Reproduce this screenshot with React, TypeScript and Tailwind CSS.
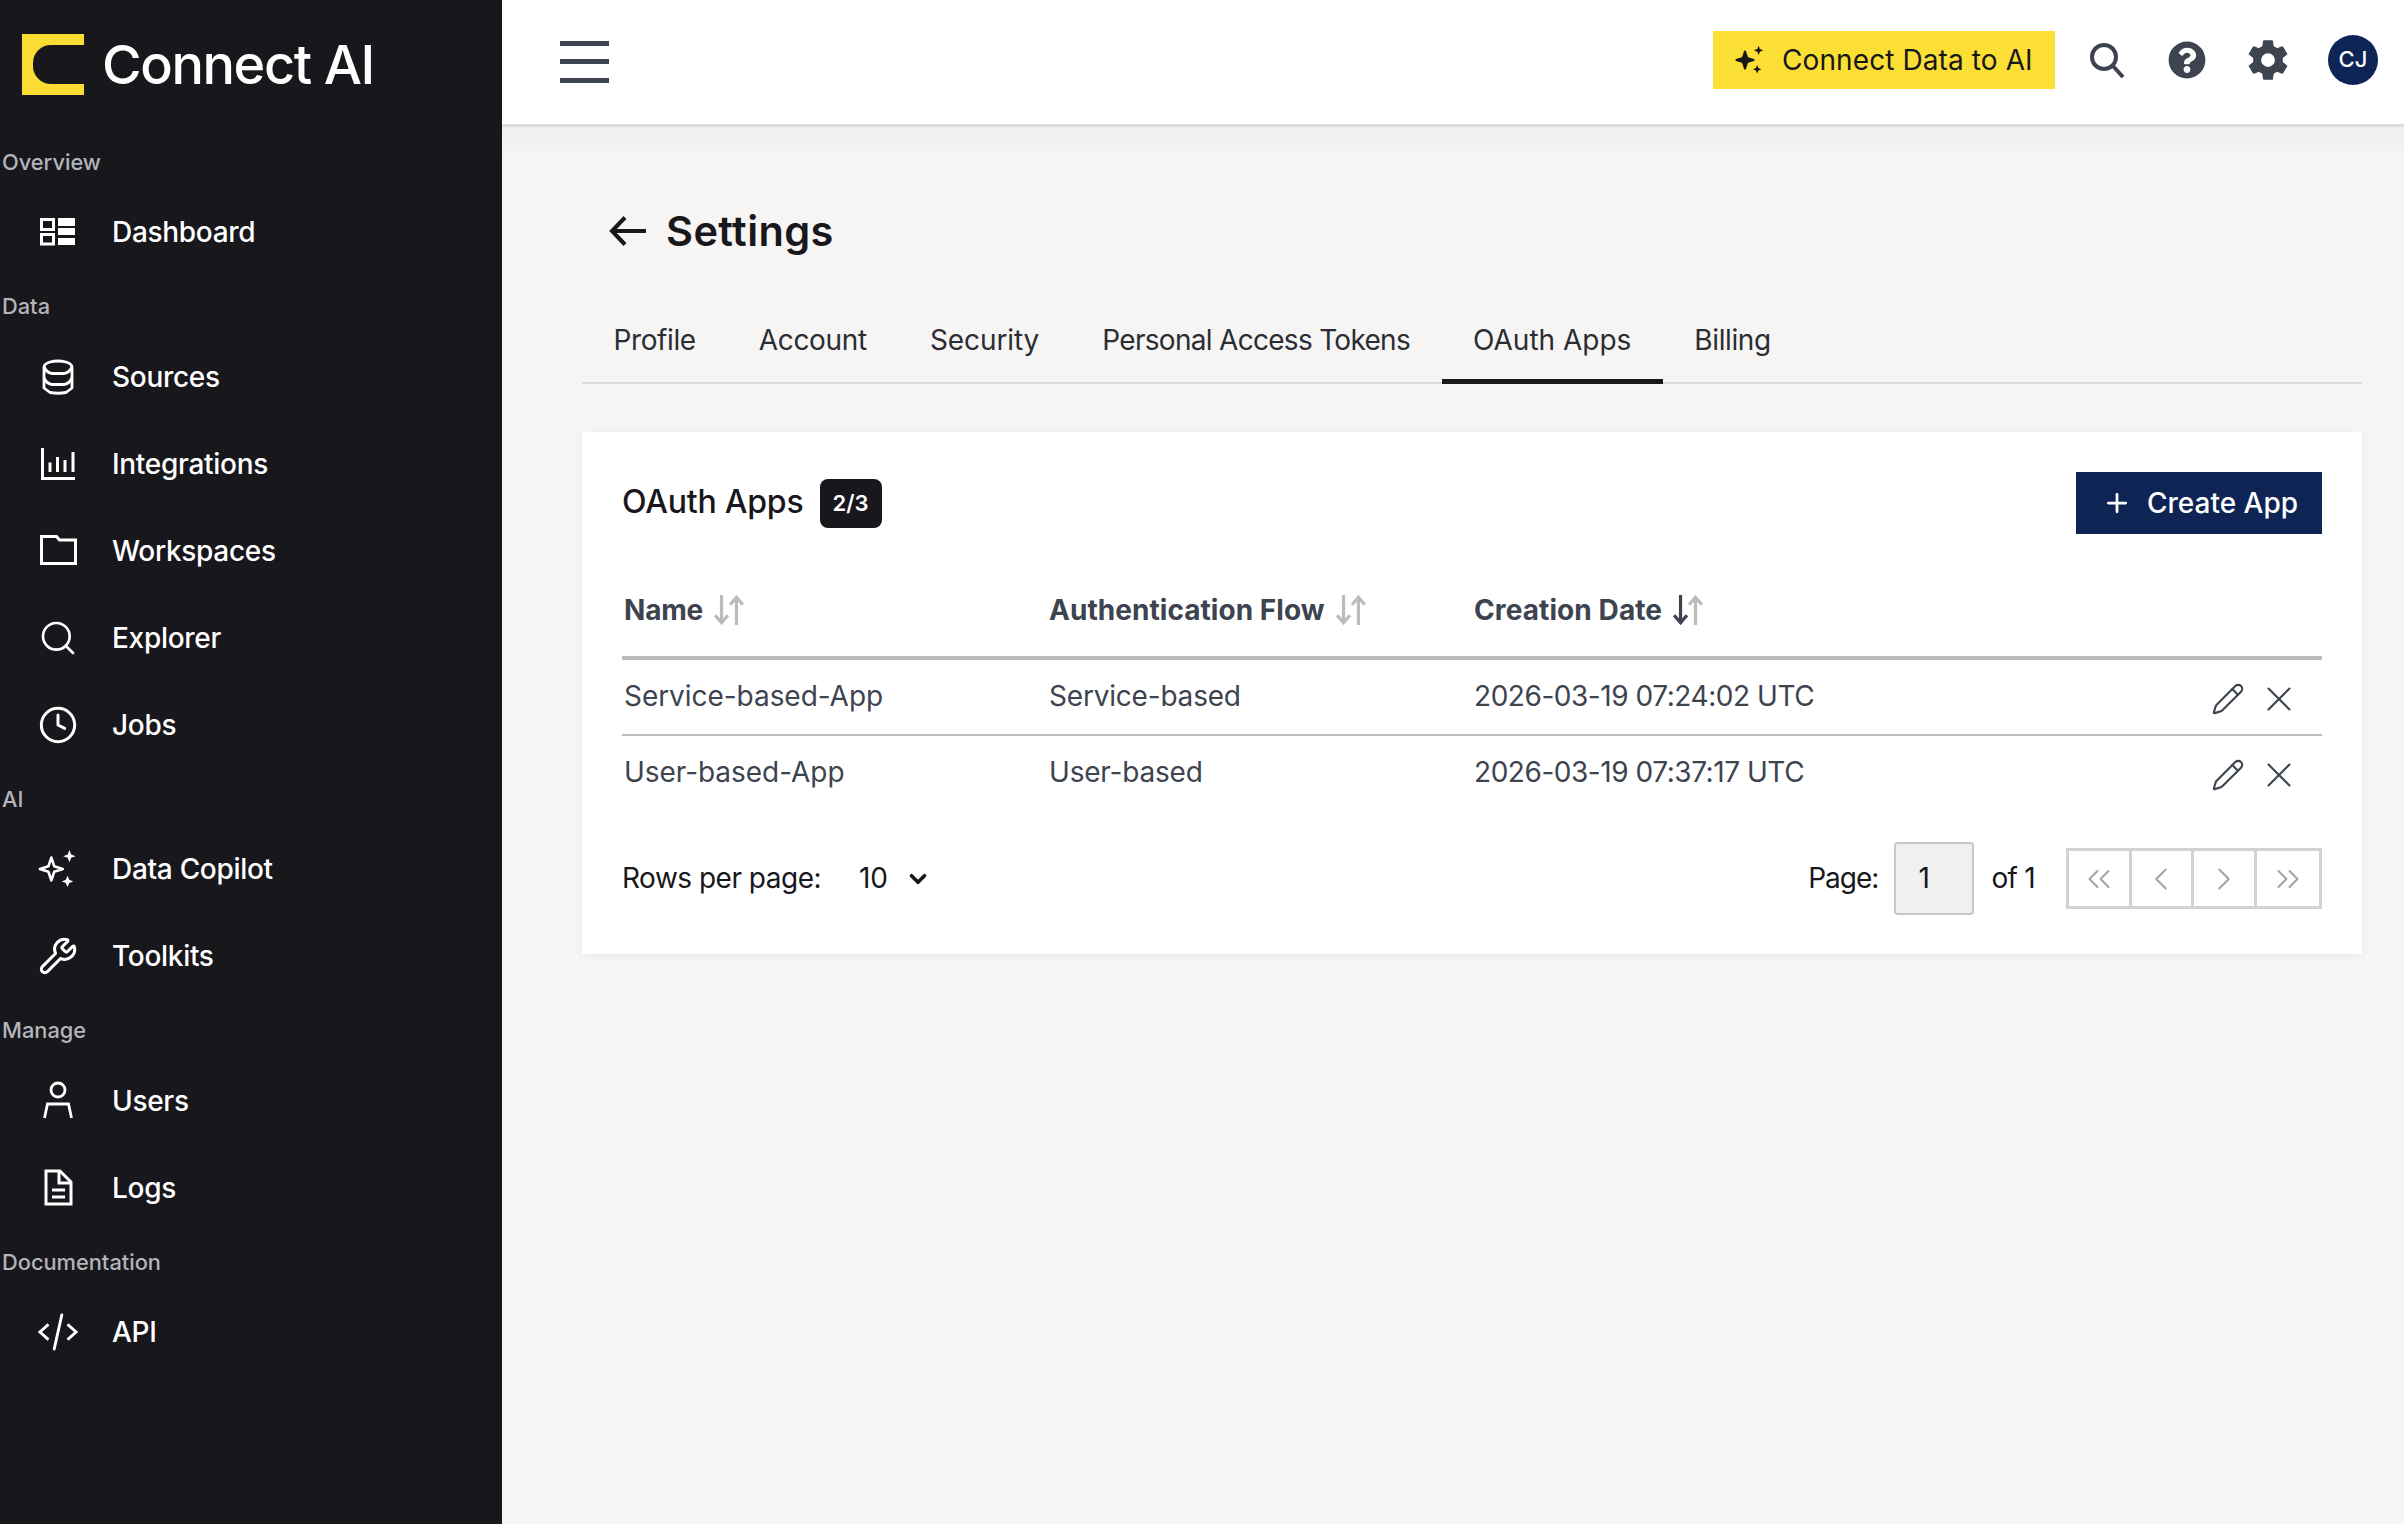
import { ReactNode } from "react"
import { ChevronLeft, ChevronRight, ChevronsLeft, ChevronsRight, ChevronDown, Plus, Search, Clock, Wrench, Pencil, X } from "lucide-react"
import { FaQuestionCircle } from "react-icons/fa"
import { IoSettingsSharp } from "react-icons/io5"

function DashboardIcon() {
  return (
    <svg width="40" height="40" viewBox="0 0 40 40" fill="none" stroke="white" strokeWidth="3">
      <rect x="3.500" y="7.500" width="12" height="10" />
      <rect x="3.500" y="22.500" width="12" height="9.500" />
      <path d="M20 6h17v8H20zM20 16h17v7H20zM20 26h17v7H20z" fill="white" stroke="none" />
    </svg>
  )
}

function DatabaseIcon() {
  return (
    <svg width="40" height="40" viewBox="0 0 40 40" fill="none" stroke="white" strokeWidth="2.800" strokeLinejoin="round">
      <path d="M6 10Q6 7 12 5Q20 3 28 5Q34 7 34 10V31L28 35.500Q20 37 12 35.500L6 31Z" />
      <path d="M6 10Q9 16 14 16.500H26Q31 16 34 10" />
      <path d="M6 21Q9 27 14 27.500H26Q31 27 34 21" />
    </svg>
  )
}

function ChartIcon() {
  return (
    <svg width="40" height="40" viewBox="0 0 40 40" fill="none" stroke="white" strokeWidth="3">
      <path d="M4.500 4v30.500H37" />
      <path d="M12 18.500V28M19.500 13v15M27 16v12M35 8v20" />
    </svg>
  )
}

function FolderIcon() {
  return (
    <svg width="40" height="40" viewBox="0 0 40 40" fill="none" stroke="white" strokeWidth="3">
      <path d="M3.500 5.500h15l3 3.500h16v23.500h-34z" />
    </svg>
  )
}

function SparkleIcon({ color = "white", solid = false, size = 42 }: { color?: string; solid?: boolean; size?: number }) {
  return (
    <svg width={size} height={size} viewBox="0 0 42 42" fill="none">
      <path d="M14 9l3 9 9 3-9 3-3 9-3-9-9-3 9-3z" stroke={color} strokeWidth="2.800" strokeLinejoin="round" fill={solid ? color : "none"} />
      <path d="M33 1l1.800 4.700 4.700 1.800-4.700 1.800L33 14l-1.800-4.700-4.700-1.800 4.700-1.800zM31 28l1.800 4.200 4.200 1.800-4.200 1.800L31 40l-1.800-4.200-4.200-1.800 4.200-1.800z" fill={color} />
    </svg>
  )
}

function UserIcon() {
  return (
    <svg width="40" height="40" viewBox="0 0 40 40" fill="none" stroke="white" strokeWidth="2.800">
      <circle cx="20" cy="9" r="7" />
      <path d="M6.500 37l3-14h21l3 14" />
    </svg>
  )
}

function FileIcon() {
  return (
    <svg width="40" height="40" viewBox="0 0 40 40" fill="none" stroke="white" strokeWidth="3">
      <path d="M8 3h14l11 11v22H8z" />
      <path d="M21 3v12h12" />
      <path d="M14 22h13M14 29h13" />
    </svg>
  )
}

function CodeIcon() {
  return (
    <svg width="42" height="40" viewBox="0 0 42 40" fill="none" stroke="white" strokeWidth="3">
      <path d="M11 12l-9 8 9 8M31 12l9 8-9 8" />
      <path d="M25 2l-8 36" strokeLinecap="round" />
    </svg>
  )
}

function HeaderSearchIcon() {
  return (
    <svg width="36" height="36" viewBox="0 0 36 36" fill="none" stroke="#3d4450" strokeWidth="4">
      <circle cx="15" cy="15" r="12" />
      <path d="M23.500 23.500L34 35" />
    </svg>
  )
}

function NavLabel({ children }: { children: ReactNode }) {
  return <div className="flex h-[57.500px] items-center pl-[2px] text-[21.800px] font-medium text-[#b4b4ba]">{children}</div>
}

function NavItem({ icon, label }: { icon: ReactNode; label: string }) {
  return (
    <div className="flex h-[87px] items-center pb-[5px] pl-[38px]">
      <span className="flex w-[40px] justify-center">{icon}</span>
      <span className="ml-[34px] text-[28px] font-medium tracking-[-0.3px] text-white">{label}</span>
    </div>
  )
}

function SortIcon({ active = false }: { active?: boolean }) {
  return (
    <svg width="32" height="32" viewBox="0 0 30 30" fill="none" strokeWidth="3">
      <path d="M8 1v26M2 20l6 7 6-7" stroke={active ? "#3d4450" : "#bcbcbc"} />
      <path d="M22 29V3M16 10l6-7 6 7" stroke="#bcbcbc" />
    </svg>
  )
}

function AppRow({ name, flow, date, last = false }: { name: string; flow: string; date: string; last?: boolean }) {
  return (
    <div className={`flex items-center pl-[2px] text-[28px] tracking-[-0.05px] text-[#3d4450] ${last ? "h-[74px]" : "h-[76px] border-b-[2px] border-[#bcbcbc]"}`}>
      <div className="w-[425px] pb-[2px]">{name}</div>
      <div className="w-[425px] pb-[2px] tracking-[-0.2px]">{flow}</div>
      <div className="flex-1 pb-[2px] tracking-[-0.45px]">{date}</div>
      <Pencil size={34} strokeWidth={1.500} className="mt-[3px]" />
      <X size={42} strokeWidth={1.200} className="ml-[13px] mr-[22px] mt-[3px]" />
    </div>
  )
}

function PageButton({ children }: { children: ReactNode }) {
  return <div className="flex h-full w-[64px] items-center justify-center border-r-[3px] border-[#d2d2d2] text-[#a4a4a4] last:border-r-0">{children}</div>
}

const tabs = [
  { label: "Profile", cls: "tracking-[-0.4px]" },
  { label: "Account", cls: "tracking-[-0.3px]" },
  { label: "Security", cls: "tracking-[-0.1px]" },
  { label: "Personal Access Tokens", cls: "tracking-[-0.7px]" },
  { label: "OAuth Apps", cls: "tracking-[0px]" },
  { label: "Billing", cls: "tracking-[-0.4px]" },
]

export default function App() {
  return (
    <div className="flex h-[1524px] w-[2404px] overflow-hidden bg-[#f6f5f4] font-['Inter',sans-serif]">
      <aside className="w-[502px] shrink-0 bg-[#17171c]">
        <div className="flex h-[133.500px] items-start pl-[22px] pt-[34px]">
          <div className="relative h-[61px] w-[62px] bg-[#fbdc32]">
            <div className="absolute right-0 top-[11px] h-[39px] w-[51px] rounded-l-[18px] bg-[#17171c]" />
          </div>
          <span className="ml-[18px] text-[54px] font-medium leading-[62px] tracking-[-1.400px] text-white">Connect AI</span>
        </div>
        <NavLabel>Overview</NavLabel>
        <NavItem icon={<DashboardIcon />} label="Dashboard" />
        <NavLabel>Data</NavLabel>
        <NavItem icon={<DatabaseIcon />} label="Sources" />
        <NavItem icon={<ChartIcon />} label="Integrations" />
        <NavItem icon={<FolderIcon />} label="Workspaces" />
        <NavItem icon={<Search size={48} strokeWidth={1.600} color="white" />} label="Explorer" />
        <NavItem icon={<Clock size={42} strokeWidth={1.800} color="white" />} label="Jobs" />
        <NavLabel>AI</NavLabel>
        <NavItem icon={<SparkleIcon />} label="Data Copilot" />
        <NavItem icon={<Wrench size={44} strokeWidth={1.800} color="white" />} label="Toolkits" />
        <NavLabel>Manage</NavLabel>
        <NavItem icon={<UserIcon />} label="Users" />
        <NavItem icon={<FileIcon />} label="Logs" />
        <NavLabel>Documentation</NavLabel>
        <NavItem icon={<CodeIcon />} label="API" />
      </aside>

      <div className="flex min-w-0 flex-1 flex-col">
        <header className="flex h-[127px] shrink-0 items-center border-b-[3px] border-[#dcdcdc] bg-white pb-[5px] pl-[58px] pr-[26px]">
          <div className="mt-[4px] flex w-[49px] flex-col gap-[13.500px]">
            <div className="h-[5px] bg-[#3d4450]" />
            <div className="h-[5px] bg-[#3d4450]" />
            <div className="h-[5px] bg-[#3d4450]" />
          </div>
          <div className="ml-auto flex h-[58px] w-[342px] items-center bg-[#fbdf34] pl-[22px]">
            <SparkleIcon color="#17171c" solid size={30} />
            <span className="ml-[17px] text-[28px] tracking-[0.1px] text-[#17171c]">Connect Data to AI</span>
          </div>
          <div className="ml-[34px]"><HeaderSearchIcon /></div>
          <FaQuestionCircle size={38} color="#3d4450" className="ml-[43px]" />
          <IoSettingsSharp size={44} color="#3d4450" className="ml-[40px]" />
          <div className="ml-[38px] flex h-[50px] w-[50px] items-center justify-center rounded-full bg-[#0d2454] text-[22px] font-medium text-white">CJ</div>
        </header>

        <main className="bg-[linear-gradient(#eeeeee,#f6f5f4_30px)] pl-[80px] pr-[42px]">
          <div className="flex h-[170px] items-center pl-[27px] pt-[38px]">
            <svg width="38" height="30" viewBox="0 0 38 30" fill="none" stroke="#17171c" strokeWidth="4">
              <path d="M37 15H3M16 1.500L3 15l13 13.500" />
            </svg>
            <h1 className="ml-[19px] text-[41.500px] font-semibold tracking-[0.4px] text-[#17171c]">Settings</h1>
          </div>

          <div className="flex h-[87px] border-b-[2px] border-[#dcdcdc]">
            {tabs.map((tab) => (
              <div
                key={tab.label}
                className={`flex h-[87px] items-center border-b-[5px] px-[31.500px] pt-[3px] text-[28px] text-[#2a2d33] ${tab.cls} ${tab.label === "OAuth Apps" ? "border-[#17171c]" : "border-transparent"}`}
              >
                {tab.label}
              </div>
            ))}
          </div>

          <section className="mt-[48px] h-[522px] bg-white px-[40px] pt-[40px] shadow-[0_2px_8px_rgba(0,0,0,0.05)]">
            <div className="flex h-[62px] items-center">
              <h2 className="pb-[2px] text-[32px] font-medium tracking-[-0.2px] text-[#17171c]">OAuth Apps</h2>
              <span className="ml-[16px] flex h-[49px] w-[62px] items-center justify-center rounded-[8px] bg-[#17171c] text-[22px] font-semibold text-white">2/3</span>
              <button className="ml-auto flex h-[62px] w-[246px] items-center bg-[#0d2454] pl-[26px] text-[28px] font-medium text-white">
                <Plus size={30} strokeWidth={2.200} />
                <span className="ml-[15px]">Create App</span>
              </button>
            </div>

            <div className="flex h-[126px] items-center border-b-[4px] border-[#bcbcbc] pl-[2px] pt-[30px] text-[28px] font-bold text-[#3d4450]">
              <div className="flex w-[425px] items-center gap-[10px] tracking-[-0.2px]">Name <SortIcon /></div>
              <div className="flex w-[425px] items-center gap-[10px] tracking-[0.05px]">Authentication Flow <SortIcon /></div>
              <div className="flex flex-1 items-center gap-[10px] tracking-[0.1px]">Creation Date <SortIcon active /></div>
            </div>

            <AppRow name="Service-based-App" flow="Service-based" date="2026-03-19 07:24:02 UTC" />
            <AppRow name="User-based-App" flow="User-based" date="2026-03-19 07:37:17 UTC" last />

            <div className="mt-[32px] flex h-[73px] items-center text-[28px] text-[#17171c]">
              <span className="pb-[2px] tracking-[-0.5px]">Rows per page:</span>
              <span className="ml-[38px] pb-[2px] tracking-[-0.3px]">10</span>
              <ChevronDown size={26} strokeWidth={3.400} className="ml-[17px]" />
              <span className="ml-auto pb-[2px] tracking-[-1px]">Page:</span>
              <div className="ml-[16px] flex h-[73px] w-[80px] items-center rounded-[4px] border-[2px] border-[#c8c8c8] bg-[#f0f0f0] pb-[2px] pl-[22px]">1</div>
              <span className="ml-[17px] pb-[2px] tracking-[-0.7px]">of 1</span>
              <div className="ml-[31px] flex h-[61px] w-[256px] border-[3px] border-[#d2d2d2]">
                <PageButton><ChevronsLeft size={38} strokeWidth={1.300} /></PageButton>
                <PageButton><ChevronLeft size={38} strokeWidth={1.300} /></PageButton>
                <PageButton><ChevronRight size={38} strokeWidth={1.300} /></PageButton>
                <PageButton><ChevronsRight size={38} strokeWidth={1.300} /></PageButton>
              </div>
            </div>
          </section>
        </main>
      </div>
    </div>
  )
}
